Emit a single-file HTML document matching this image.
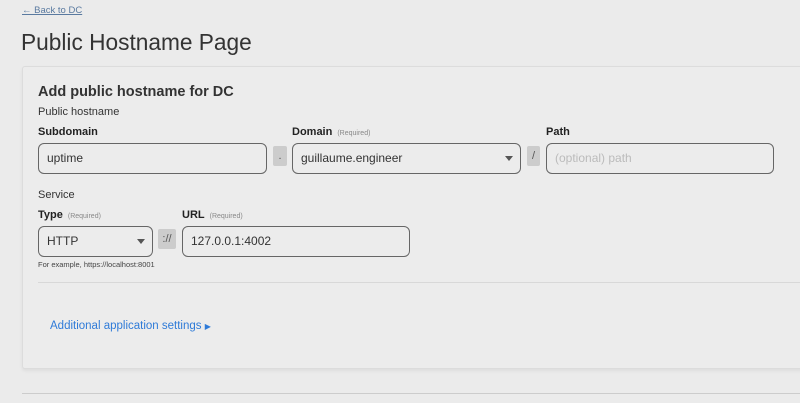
<!DOCTYPE html>
<html><head><style>
*{margin:0;padding:0;box-sizing:border-box}
body{width:800px;height:403px;background:#ebebeb;font-family:"Liberation Sans",sans-serif;color:#333;position:relative;overflow:hidden}
.a{position:absolute;white-space:nowrap}
.inp{position:absolute;border:1px solid #666;border-radius:6px;height:31px;background:#ececec;font-size:12px;padding-left:8px;line-height:29px;color:#333}
.sep{position:absolute;background:#ccc;border-radius:2px;font-size:11px;color:#555;text-align:center;line-height:20px;height:20px}
.lbl{font-size:11px;font-weight:bold;color:#222}
.req{font-size:7px;color:#888;font-weight:normal;margin-left:5px}
.arr{position:absolute;width:0;height:0;border-left:4px solid transparent;border-right:4px solid transparent;border-top:5px solid #555}
</style></head><body>
<div class="a" style="left:22px;top:5px;font-size:9.5px;color:#5a7aa0;text-decoration:underline">← Back to DC</div>
<div class="a" style="left:21px;top:29px;font-size:22.7px;color:#333">Public Hostname Page</div>
<div class="a" style="left:22px;top:66px;width:800px;height:303px;border:1px solid #dcdcdc;border-radius:3px;background:#ececec;box-shadow:0 2px 3px rgba(0,0,0,0.06)"></div>
<div class="a" style="left:38px;top:84px;font-size:14.5px;font-weight:bold;color:#333">Add public hostname for DC</div>
<div class="a" style="left:38px;top:106px;font-size:11px">Public hostname</div>
<div class="a lbl" style="left:38px;top:126px">Subdomain</div>
<div class="a lbl" style="left:292px;top:126px">Domain<span class="req">(Required)</span></div>
<div class="a lbl" style="left:546px;top:126px">Path</div>
<div class="inp" style="left:38px;top:143px;width:229px">uptime</div>
<div class="sep" style="left:273px;top:146px;width:14px">.</div>
<div class="inp" style="left:292px;top:143px;width:229px">guillaume.engineer</div>
<div class="arr" style="left:505px;top:156px"></div>
<div class="sep" style="left:527px;top:146px;width:13px">/</div>
<div class="inp" style="left:546px;top:143px;width:228px;color:#bbb">(optional) path</div>
<div class="a" style="left:38px;top:189px;font-size:11px">Service</div>
<div class="a lbl" style="left:38px;top:209px">Type<span class="req">(Required)</span></div>
<div class="a lbl" style="left:182px;top:209px">URL<span class="req">(Required)</span></div>
<div class="inp" style="left:38px;top:226px;width:115px">HTTP</div>
<div class="arr" style="left:137px;top:239px"></div>
<div class="sep" style="left:158px;top:229px;width:18px">://</div>
<div class="inp" style="left:182px;top:226px;width:228px">127.0.0.1:4002</div>
<div class="a" style="left:38px;top:260px;font-size:7.5px;color:#444">For example, https://localhost:8001</div>
<div class="a" style="left:38px;top:282px;width:770px;height:1px;background:#d8d8d8"></div>
<div class="a" style="left:50px;top:320px;font-size:11.5px;color:#2f7bd8">Additional application settings <span style="font-size:8px">▶</span></div>
<div class="a" style="left:22px;top:393px;width:780px;height:1px;background:#ccc"></div>
</body></html>
